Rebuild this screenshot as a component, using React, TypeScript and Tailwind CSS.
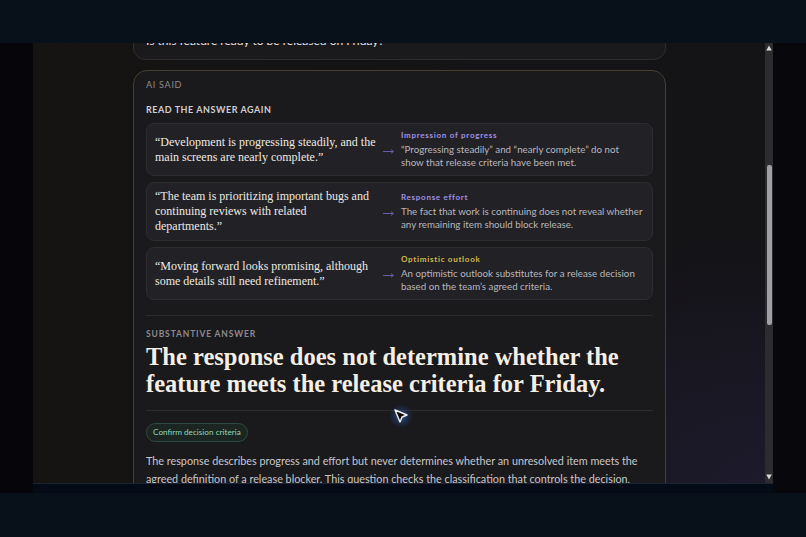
import React from "react";

type Row = {
  q: string[];
  label: string;
  tone: "purple" | "gold";
  d: string[];
};

const rows: Row[] = [
  {
    q: ["\u201CDevelopment is progressing steadily, and the", "main screens are nearly complete.\u201D"],
    label: "Impression of progress",
    tone: "purple",
    d: ["\u201CProgressing steadily\u201D and \u201Cnearly complete\u201D do not", "show that release criteria have been met."],
  },
  {
    q: ["\u201CThe team is prioritizing important bugs and", "continuing reviews with related", "departments.\u201D"],
    label: "Response effort",
    tone: "purple",
    d: ["The fact that work is continuing does not reveal whether", "any remaining item should block release."],
  },
  {
    q: ["\u201CMoving forward looks promising, although", "some details still need refinement.\u201D"],
    label: "Optimistic outlook",
    tone: "gold",
    d: ["An optimistic outlook substitutes for a release decision", "based on the team\u2019s agreed criteria."],
  },
];

function Lines({ lines }: { lines: string[] }) {
  return (
    <>
      {lines.map((l, i) => (
        <span key={i} className="block whitespace-nowrap">
          {l}
        </span>
      ))}
    </>
  );
}

function AnswerRow({ row }: { row: Row }) {
  return (
    <div className="flex items-center rounded-[8px] border border-[#2d2c30] bg-[#222125] py-[6px] pl-[8px]">
      <div className="w-[226px] font-['Liberation_Serif',serif] text-[12px] leading-[15px] text-[#eeeae4]">
        <Lines lines={row.q} />
      </div>
      <div className="flex w-[14px] justify-center pt-[3px]">
        <svg width="11" height="5" viewBox="0 0 11 5">
          <path d="M0 2.5 H10.2 M8 0.6 L10.4 2.5 L8 4.4" fill="none" stroke="#6d64bb" strokeWidth="0.9" />
        </svg>
      </div>
      <div className="ml-[6px] flex flex-col">
        <div
          className={
            row.tone === "gold"
              ? "font-['Lato',sans-serif] text-[8px] font-bold leading-[11px] tracking-[0.09em] text-[#d6b64a]"
              : "font-['Lato',sans-serif] text-[8px] font-bold leading-[11px] tracking-[0.09em] text-[#a092e6]"
          }
        >
          {row.label}
        </div>
        <div className="mt-[2px] font-['Lato',sans-serif] text-[9.75px] leading-[13px] text-[#b9b7bd]">
          <Lines lines={row.d} />
        </div>
      </div>
    </div>
  );
}

function Cursor() {
  return (
    <div className="absolute left-[356px] top-[361px] h-[24px] w-[24px] rounded-full bg-[radial-gradient(circle,rgba(70,140,230,0.6)_0%,rgba(40,90,180,0.28)_40%,transparent_72%)]">
      <svg width="18" height="18" viewBox="0 0 18 18" className="absolute left-[3px] top-[3px]">
        <path d="M3 3 L15 8 L10 10 L8 15 Z" fill="#0b0b0d" stroke="#f2f2f2" strokeWidth="1.4" strokeLinejoin="round" />
      </svg>
    </div>
  );
}

export default function App() {
  return (
    <div className="flex h-[537px] w-[806px] flex-col overflow-hidden bg-[#08101a]">
      <div className="h-[43px] shrink-0 bg-[#08101a]" />
      <div className="flex h-[440px] shrink-0 bg-[#060509]">
        <div className="w-[33px] shrink-0" />
        <div className="relative w-[732px] shrink-0 overflow-hidden bg-[radial-gradient(ellipse_at_100%_100%,#1d1a2c_0%,rgba(29,26,44,0)_40%),linear-gradient(90deg,#151312_0%,#141315_60%,#141316_100%)]">
          <div className="ml-[100px] mt-[-45px] flex w-[533px] flex-col gap-[10px]">
            {/* question card */}
            <div className="rounded-[12px] border border-[#2f2d30] bg-[#1a191c] px-[12px] pb-[10px] pt-[14px]">
              <div className="font-['Lato',sans-serif] text-[9px] leading-[12px] tracking-[0.08em] text-[#8f8d92]">
                YOU ASKED
              </div>
              <div className="mt-[8px] font-['Lato',sans-serif] text-[12px] leading-[16px] text-[#e6e4e8]">
                Is this feature ready to be released on Friday?
              </div>
            </div>

            {/* AI said card */}
            <div className="rounded-[14px] border border-[#46402f] bg-[#1a191c] px-[12px] pb-[20px] pt-[8px]">
              <div className="font-['Lato',sans-serif] text-[9px] leading-[12px] tracking-[0.08em] text-[#8f8d92]">
                AI SAID
              </div>
              <div className="mt-[13px] font-['Lato',sans-serif] text-[9px] font-bold leading-[12px] tracking-[0.06em] text-[#d0ced3]">
                READ THE ANSWER AGAIN
              </div>
              <div className="mt-[7px] flex flex-col gap-[6px]">
                {rows.map((r, i) => (
                  <AnswerRow key={i} row={r} />
                ))}
              </div>

              <div className="mt-[15px] border-t border-[#2a292d] pt-[12px]">
                <div className="font-['Lato',sans-serif] text-[8.5px] font-bold leading-[12px] tracking-[0.1em] text-[#8d8b90]">
                  SUBSTANTIVE ANSWER
                </div>
                <h1 className="mt-[3px] font-['Liberation_Serif',serif] text-[24.5px] font-bold leading-[27px] text-[#f4efe5]">
                  <span className="block whitespace-nowrap">The response does not determine whether the</span>
                  <span className="block whitespace-nowrap">feature meets the release criteria for Friday.</span>
                </h1>
              </div>

              <div className="mt-[13px] border-t border-[#2c2b2f] pt-[12px]">
                <div className="flex">
                  <div className="flex h-[19px] items-center rounded-full border border-[#2f4a40] bg-[#1b2522] px-[6px] font-['Lato',sans-serif] text-[8.2px] leading-none text-[#95d8b8]">
                    Confirm decision criteria
                  </div>
                </div>
                <p className="mt-[10px] font-['Lato',sans-serif] text-[10.8px] leading-[18px] text-[#c9c7cc]">
                  <span className="block whitespace-nowrap">
                    The response describes progress and effort but never determines whether an unresolved item meets the
                  </span>
                  <span className="block whitespace-nowrap">
                    agreed definition of a release blocker. This question checks the classification that controls the decision,
                  </span>
                </p>
              </div>
            </div>
          </div>
          <Cursor />
        </div>

        {/* scrollbar */}
        <div className="flex w-[8px] shrink-0 flex-col items-center bg-[#2c2c2e]">
          <svg width="6" height="6" viewBox="0 0 6 6" className="mt-[2px]">
            <path d="M3 0.5 L5.8 5.5 L0.2 5.5 Z" fill="#d8d8d8" />
          </svg>
          <div className="mt-[114px] h-[160px] w-[5px] rounded-[2px] bg-[#a0a0a2]" />
          <div className="flex-1" />
          <svg width="6" height="6" viewBox="0 0 6 6" className="mb-[3px]">
            <path d="M0.2 0.5 L5.8 0.5 L3 5.5 Z" fill="#d8d8d8" />
          </svg>
        </div>
        <div className="flex-1 bg-[#08070c]" />
      </div>

      {/* bottom strip */}
      <div className="flex h-[10px] shrink-0">
        <div className="w-[33px] shrink-0 bg-[#060509]" />
        <div className="w-[740px] shrink-0 border-t border-[#1b2334] bg-[#050a17]" />
        <div className="flex-1 bg-[#08070c]" />
      </div>
      <div className="flex-1 bg-[#08111a]" />
    </div>
  );
}
